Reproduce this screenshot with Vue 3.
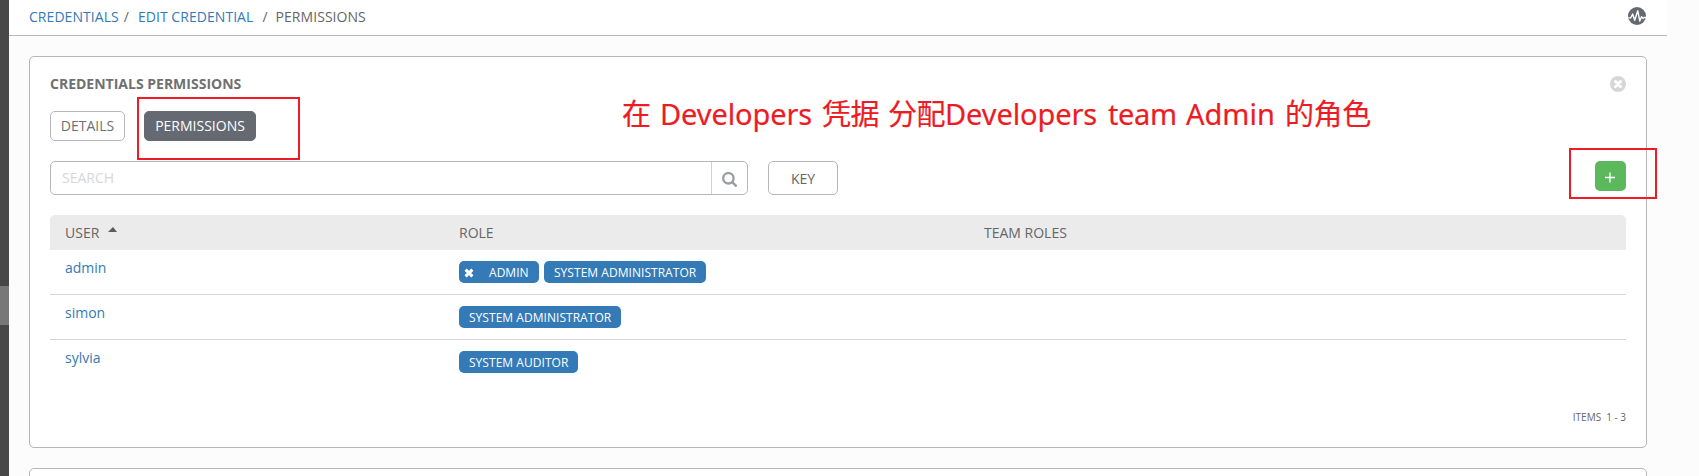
<script setup>
const crumbs = [
  { label: 'CREDENTIALS', link: true },
  { label: 'EDIT CREDENTIAL', link: true },
  { label: 'PERMISSIONS', link: false },
]
const users = [
  { name: 'admin', roles: [{ label: 'ADMIN', removable: true }, { label: 'SYSTEM ADMINISTRATOR' }] },
  { name: 'simon', roles: [{ label: 'SYSTEM ADMINISTRATOR' }] },
  { name: 'sylvia', roles: [{ label: 'SYSTEM AUDITOR' }] },
]
</script>

<template>
  <div class="page">
    <aside class="rail"><div class="rail-active"></div></aside>
    <div class="main">
      <header class="topbar">
        <nav class="crumbs">
          <template v-for="(c, i) in crumbs" :key="c.label">
            <span v-if="i" class="sep" :class="'sep-' + i">/</span>
            <a v-if="c.link">{{ c.label }}</a>
            <span v-else>{{ c.label }}</span>
          </template>
        </nav>
        <svg class="activity" viewBox="0 0 18 18">
          <circle cx="9" cy="9" r="9" fill="#646972" />
          <path d="M.3 10.9H2.7L4.7 7.1L6.7 13.3L9.8 3.8L11.8 14L13.5 9.7L15 11.4L16 10.5H18" fill="none" stroke="#fff" stroke-width="1.4" stroke-linejoin="round" />
        </svg>
      </header>

      <section class="card">
        <div class="title-row">
          <h1>CREDENTIALS PERMISSIONS</h1>
          <svg class="close" viewBox="0 0 16 16">
            <circle cx="8" cy="8" r="8" fill="#d7d7d7" />
            <path d="M5.5 5.5L10.5 10.5M10.5 5.5L5.5 10.5" stroke="#fff" stroke-width="3" stroke-linecap="round" />
          </svg>
        </div>
        <div class="tabs">
          <button class="tab">DETAILS</button>
          <button class="tab active">PERMISSIONS</button>
        </div>
        <div class="tools">
          <div class="search">
            <span class="placeholder">SEARCH</span>
            <span class="search-btn">
              <svg viewBox="0 0 15 15">
                <circle cx="6.4" cy="6.3" r="5.2" fill="none" stroke="#9a9da5" stroke-width="2.3" />
                <path d="M10.2 10.2L13.8 13.7" stroke="#9a9da5" stroke-width="2.5" stroke-linecap="round" />
              </svg>
            </span>
          </div>
          <button class="key">KEY</button>
          <button class="add">
            <svg viewBox="0 0 10 10"><path d="M0 5.5H10M5 .5V10.5" stroke="#fff" stroke-width="1.3" /></svg>
          </button>
        </div>
        <div class="table">
          <div class="row head">
            <div class="cell">USER <i class="caret"></i></div>
            <div>ROLE</div>
            <div>TEAM ROLES</div>
          </div>
          <div v-for="u in users" :key="u.name" class="row body">
            <div class="cell"><a>{{ u.name }}</a></div>
            <div class="tags">
              <span v-for="r in u.roles" :key="r.label" class="tag" :class="{ removable: r.removable }">
                <svg v-if="r.removable" viewBox="0 0 10 10">
                  <path d="M1.6 1.6L8.4 8.4M8.4 1.6L1.6 8.4" stroke="#fff" stroke-width="3" />
                </svg>
                <span>{{ r.label }}</span>
              </span>
            </div>
            <div></div>
          </div>
        </div>
        <div class="pager"><span>ITEMS</span><span>1 - 3</span></div>
      </section>
      <section class="card next"></section>
    </div>

    <div class="mark mark-tab"></div>
    <div class="mark mark-add"></div>
    <div class="note">
      <span class="n1">在</span><span class="n2">Developers</span><span class="n3">凭据</span><span class="n4">分配</span><span class="n5">Developers</span><span class="n6">team</span><span class="n7">Admin</span><span class="n8">的角色</span>
    </div>
  </div>
</template>

<style>
body { background: #fcfcfc; overflow: hidden; }
</style>

<style scoped>
* { box-sizing: border-box; }
.page {
  position: relative;
  display: flex;
  width: 1699px;
  height: 476px;
  overflow: hidden;
  background: #fcfcfc;
  color: #666;
  font: 14px/20px "Open Sans", "Noto Sans", sans-serif;
}
.rail { width: 9px; flex: none; background: #484848; padding-top: 286px; }
.rail-active { height: 39px; background: #787878; }
.main { flex: 1; display: flex; flex-direction: column; }
a { color: #337ab7; }
.topbar {
  width: 1658px;
  height: 36px;
  flex: none;
  display: flex;
  justify-content: space-between;
  align-items: flex-start;
  padding: 7px 21px 0 20px;
  background: #fff;
  border-bottom: 1px solid #b7b7b7;
}
.crumbs { display: flex; letter-spacing: .05px; }
.sep-1 { margin: 0 9px 0 5px; }
.sep-2 { margin: 0 8px 0 9px; }
.activity { width: 18px; height: 18px; }
.card {
  width: 1618px;
  height: 392px;
  flex: none;
  margin: 20px 0 0 20px;
  padding: 17px 20px 0;
  background: #fff;
  border: 1px solid #b7b7b7;
  border-radius: 5px;
}
.title-row { display: flex; justify-content: space-between; align-items: center; height: 20px; }
h1 { margin: 0; font-size: 14px; line-height: 20px; font-weight: 700; color: #707070; }
.close { width: 16px; height: 16px; }
.tabs { display: flex; gap: 19px; margin-top: 17px; }
button { font: inherit; color: #666; background: #fff; border: 1px solid #b7b7b7; border-radius: 5px; padding: 0; }
.tab { width: 75px; height: 30px; line-height: 28px; color: #707070; }
.tab.active { width: 112px; background: #646972; border-color: #646972; color: #fff; }
.tools { display: flex; align-items: flex-start; margin-top: 20px; height: 34px; }
.search {
  display: flex;
  justify-content: space-between;
  width: 698px;
  height: 34px;
  border: 1px solid #b7b7b7;
  border-radius: 5px;
}
.placeholder { padding-left: 11px; line-height: 32px; color: #d7d7d7; }
.search-btn { width: 36px; border-left: 1px solid #d0d0d0; padding: 10px 0 0 10px; }
.search-btn svg { display: block; width: 15px; height: 15px; }
.key { width: 70px; height: 34px; margin-left: 20px; line-height: 34px; }
.add {
  width: 31px;
  height: 30px;
  margin-left: auto;
  background: #5cb85c;
  border: 0;
  display: flex;
  justify-content: flex-start;
  align-items: flex-start;
  padding: 11px 0 0 10px;
}
.add svg { width: 10px; height: 10px; overflow: visible; }
.table { margin-top: 20px; }
.row { display: grid; grid-template-columns: 409px 525px 1fr; }
.head { height: 35px; line-height: 36px; background: #ebebeb; border-radius: 5px 5px 0 0; }
.cell { padding-left: 15px; }
.caret {
  display: inline-block;
  margin-left: 5px;
  vertical-align: 6px;
  border: 4.5px solid transparent;
  border-top: 0;
  border-bottom: 5px solid #5a5a5a;
  border-left-width: 5px;
  border-right-width: 4px;
}
.body { height: 45px; border-bottom: 1px solid #d7d7d7; padding-top: 8px; }
.body:last-child { border-bottom: 0; }
.tags { display: flex; gap: 5px; padding-top: 3px; }
.tag {
  height: 22px;
  padding: 0 10px;
  background: #337ab7;
  border-radius: 5px;
  color: #fff;
  font-size: 12px;
  line-height: 23px;
  letter-spacing: .04px;
  display: flex;
}
.tag.removable { width: 80px; padding-left: 5px; }
.tag svg { width: 10px; height: 10px; margin: 7px 15px 0 0; }
.pager { display: flex; justify-content: flex-end; gap: 5px; margin-top: 22px; font-size: 10px; line-height: 20px; }
.mark { position: absolute; border: 2px solid #ed1c24; }
.mark-tab { left: 137px; top: 97px; width: 163px; height: 63px; }
.mark-add { left: 1569px; top: 148px; width: 88px; height: 51px; }
.note {
  position: absolute;
  left: 622px;
  top: 94px;
  display: flex;
  white-space: nowrap;
  color: #ed1c24;
  font: 29px/40px "Noto Sans", "Noto Sans CJK SC", sans-serif;
  -webkit-text-stroke: .2px #ed1c24;
}
.n1 { width: 38px; }
.n2 { width: 162px; letter-spacing: -.1px; }
.n3 { width: 66px; letter-spacing: -.5px; }
.n4 { width: 57px; letter-spacing: -.5px; }
.n5 { width: 163px; letter-spacing: -.1px; }
.n6 { width: 78px; letter-spacing: -.4px; }
.n7 { width: 99px; }
.n8 { letter-spacing: -.4px; }
</style>
